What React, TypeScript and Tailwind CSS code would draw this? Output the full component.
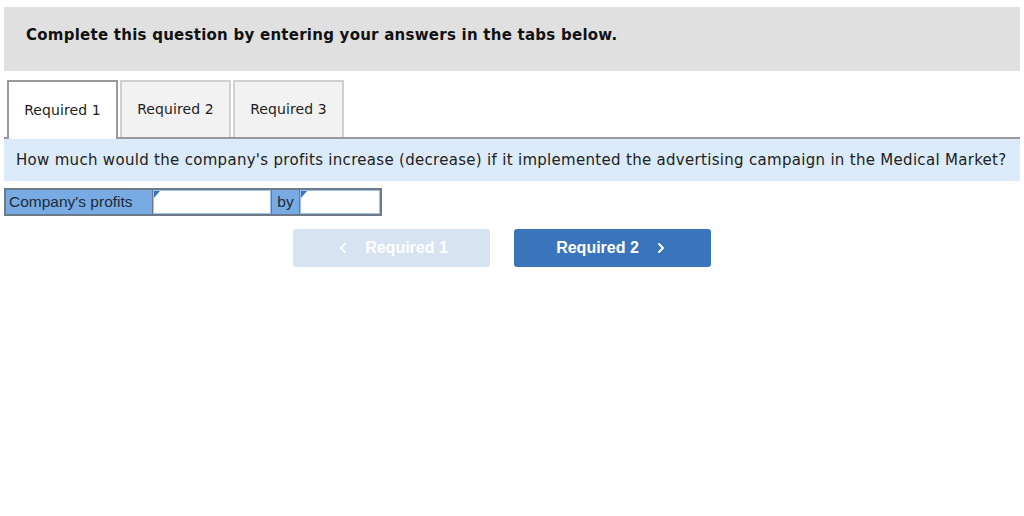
import { ChevronLeft, ChevronRight } from 'lucide-react';

const verdana = { fontFamily: '"DejaVu Sans", Verdana, sans-serif' };

function Tab({ label, active }: { label: string; active?: boolean }) {
    return (
        <div
            className={`flex items-center justify-center text-[14px] tracking-[0.1px] text-[#222] w-[111px] ${active
                ? 'bg-white border-2 border-b-0 border-[#9a9a9a] -mb-[2px] h-[59px]'
                : 'h-[57px] bg-[#f2f2f2] border-2 border-b-0 border-[#d0d0d0]'
                }`}
        >
            {label}
        </div>
    );
}

function AnswerInput({ width }: { width: string }) {
    return (
        <div className={`relative h-full ${width} bg-white border border-[#9fc2ea]`}>
            <div className="absolute left-0 top-0 w-0 h-0 border-t-[7px] border-t-[#3a75c4] border-r-[6px] border-r-transparent" />
        </div>
    );
}

export default function App() {
    return (
        <div className="w-[1024px] h-[516px] bg-white px-[4px] pt-[7px]" style={verdana}>
            {/* Header */}
            <div className="h-[64px] w-[1016px] bg-[#e0e0e0] pl-[22px] pt-[16px]">
                <span className="font-bold text-[15px] leading-[20px] tracking-[0.25px] text-[#111]">
                    Complete this question by entering your answers in the tabs below.
                </span>
            </div>

            {/* Tabs */}
            <div className="mt-[9px] w-[1016px] flex gap-[2px] pl-[3px] border-b-2 border-[#9a9a9a] h-[59px]">
                <Tab label="Required 1" active />
                <Tab label="Required 2" />
                <Tab label="Required 3" />
            </div>

            {/* Question */}
            <div className="h-[42px] w-[1016px] bg-[#dbebf9] flex items-center pl-[12px] text-[15px] tracking-[0.3px] text-[#222]">
                How much would the company's profits increase (decrease) if it implemented the advertising campaign in the Medical Market?
            </div>

            {/* Answer row */}
            <div
                className="mt-[7px] flex h-[28px] w-[378px] border-2 border-[#6e7a87] bg-[#6e7a87] gap-[1px]"
                style={{ fontFamily: '"Liberation Sans", Arial, sans-serif' }}
            >
                <div className="w-[146px] bg-[#78abe3] flex items-center pl-[3px] text-[15.5px] text-[#1f2a36]">
                    Company's profits
                </div>
                <AnswerInput width="w-[118px]" />
                <div className="w-[27px] bg-[#78abe3] flex items-center justify-center text-[15.5px] text-[#1f2a36]">
                    by
                </div>
                <AnswerInput width="w-[80px]" />
            </div>

            {/* Nav buttons */}
            <div
                className="mt-[13px] flex gap-[24px] pl-[289px]"
                style={{ fontFamily: '"Liberation Sans", Arial, sans-serif' }}
            >
                <button className="w-[197px] h-[38px] rounded-[3px] bg-[#d7e3f1] text-white font-bold text-[16px] flex items-center justify-center gap-[14px]">
                    <ChevronLeft size={16} strokeWidth={3} />
                    Required 1
                </button>
                <button className="w-[197px] h-[38px] rounded-[3px] bg-[#3a75bb] text-white font-bold text-[16px] flex items-center justify-center gap-[14px]">
                    Required 2
                    <ChevronRight size={16} strokeWidth={3} />
                </button>
            </div>
        </div>
    );
}
